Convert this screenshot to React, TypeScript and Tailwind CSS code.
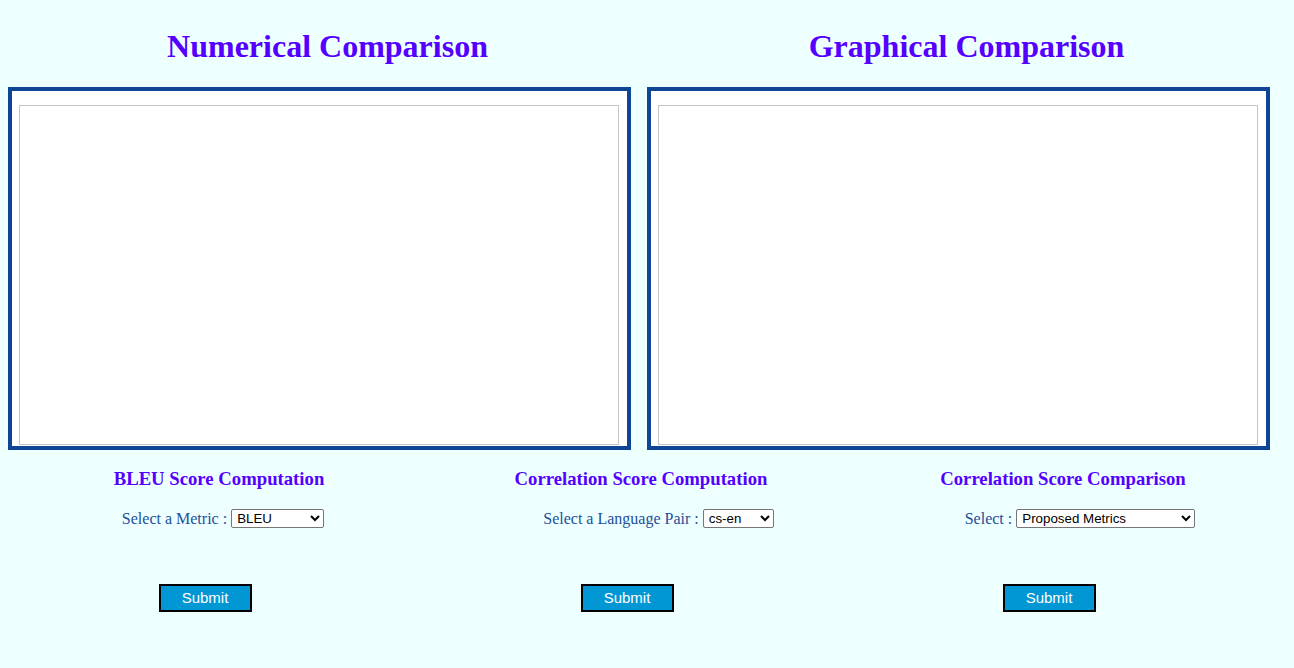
import React from "react";

const serif = "font-['Liberation_Serif',serif]";
const sans = "font-['Liberation_Sans',Arial,sans-serif]";

function Frame() {
  return (
    <div className="w-[623px] h-[363px] border-4 border-[#104595] bg-white pl-[7px] pt-[14px]">
      <div className="w-[600px] h-[340px] border border-[#c4c4c4] bg-white" />
    </div>
  );
}

function Tool({
  title,
  label,
  options,
  selectW,
  rowPad,
}: {
  title: string;
  label: string;
  options: string[];
  selectW: string;
  rowPad: string;
}) {
  return (
    <div className="flex flex-col items-center">
      <h3 className={`${serif} text-[18.72px] leading-[21px] font-bold text-[#5500ff]`}>{title}</h3>
      <div className={`flex items-center justify-center mt-[20px] h-[19px] ${rowPad}`}>
        <span className={`${serif} text-[16px] text-[#22509a] whitespace-pre`}>{label} : </span>
        <select
          className={`${sans} ${selectW} h-[19px] text-[13.33px] text-black bg-white border border-[#767676] rounded-[2px] pl-[1px]`}
          defaultValue={options[0]}
        >
          {options.map((o) => (
            <option key={o}>{o}</option>
          ))}
        </select>
      </div>
      <div className="pr-[28px] mt-[56px]">
        <button
          className={`${sans} w-[93px] h-[28px] bg-[#0197d5] border-2 border-black text-white text-[15px] leading-none pb-[1px]`}
        >
          Submit
        </button>
      </div>
    </div>
  );
}

export default function App() {
  return (
    <div className="min-h-screen bg-[#eeffff] pt-[8px] px-[8px]">
      <div className="grid grid-cols-[639px_639px]">
        <div className="flex flex-col">
          <h1 className={`${serif} text-[32px] leading-[37px] font-bold text-[#5500ff] text-center mt-[20px] mb-[22px]`}>
            Numerical Comparison
          </h1>
          <Frame />
        </div>
        <div className="flex flex-col">
          <h1 className={`${serif} text-[32px] leading-[37px] font-bold text-[#5500ff] text-center mt-[20px] mb-[22px]`}>
            Graphical Comparison
          </h1>
          <Frame />
        </div>
      </div>
      <div className="grid grid-cols-[422px_422px_422px] mt-[18px]">
        <Tool title="BLEU Score Computation" label="Select a Metric" options={["BLEU"]} selectW="w-[93px]" rowPad="pl-[8px]" />
        <Tool
          title="Correlation Score Computation"
          label="Select a Language Pair"
          options={["cs-en"]}
          selectW="w-[71px]"
          rowPad="pl-[35px]"
        />
        <Tool
          title="Correlation Score Comparison"
          label="Select"
          options={["Proposed Metrics"]}
          selectW="w-[179px]"
          rowPad="pl-[34px]"
        />
      </div>
    </div>
  );
}
